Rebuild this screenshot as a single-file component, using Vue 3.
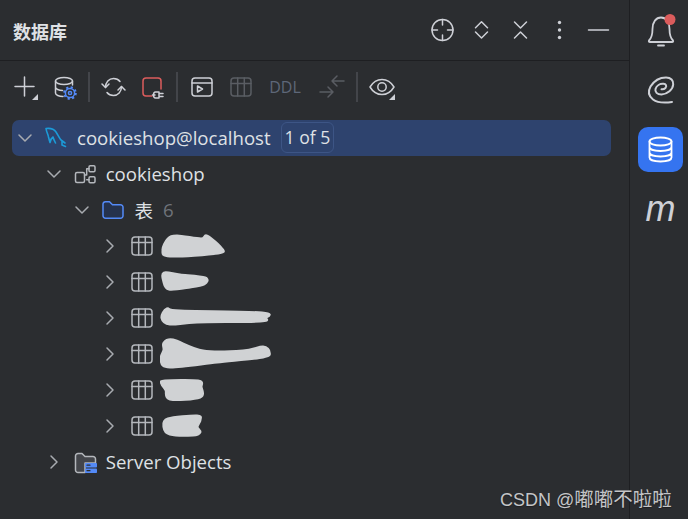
<script setup>
// points of the painted-over table names, smoothed into closed shapes
const smooth = (pts) => {
  const n = pts.length
  let d = `M${pts[0][0]} ${pts[0][1]}`
  for (let i = 0; i < n; i++) {
    const p0 = pts[(i - 1 + n) % n]
    const p1 = pts[i]
    const p2 = pts[(i + 1) % n]
    const p3 = pts[(i + 2) % n]
    const c1 = [p1[0] + (p2[0] - p0[0]) / 6, p1[1] + (p2[1] - p0[1]) / 6]
    const c2 = [p2[0] - (p3[0] - p1[0]) / 6, p2[1] - (p3[1] - p1[1]) / 6]
    d += `C${c1[0].toFixed(1)} ${c1[1].toFixed(1)} ${c2[0].toFixed(1)} ${c2[1].toFixed(1)} ${p2[0]} ${p2[1]}`
  }
  return d + 'Z'
}

const tables = [
  [[3, 22], [8, 11], [17, 8], [41, 11], [47, 8], [61, 20], [58, 25], [10, 28]],
  [[4, 9], [20, 11], [45, 14], [44, 20], [30, 23], [9, 25], [4, 18]],
  [[2, 18], [7, 9], [20, 11], [102, 13], [105, 18], [100, 21], [37, 22], [10, 24]],
  [[1, 24], [4, 14], [4, 7], [13, 4], [43, 15], [83, 15], [103, 11], [109, 16], [103, 21], [57, 26], [10, 31]],
  [[2, 12], [5, 9], [38, 9], [41, 15], [40, 25], [10, 27], [6, 18]],
  [[4, 19], [8, 11], [37, 8], [40, 12], [37, 19], [40, 24], [33, 27], [10, 26]]
].map(smooth)
</script>

<template>
  <div class="window">
    <main class="panel">
      <header class="head">
        <h1 class="title">数据库</h1>
        <div class="head-actions">
          <svg class="hicon" viewBox="0 0 24 24"><circle cx="12" cy="12" r="10.5"/><path d="M12 1.5V7M12 17V22.5M1.5 12H7M17 12H22.5"/></svg>
          <svg class="hicon" viewBox="0 0 24 24"><path d="M6 9.7L12 3.7L18 9.7M6 14L12 20L18 14"/></svg>
          <svg class="hicon" viewBox="0 0 24 24"><path d="M6 4L12 10L18 4M6 20L12 14L18 20"/></svg>
          <svg class="hicon" viewBox="0 0 24 24"><circle class="solid" cx="12" cy="4.5" r="1.7"/><circle class="solid" cx="12" cy="12" r="1.7"/><circle class="solid" cx="12" cy="19.5" r="1.7"/></svg>
          <svg class="hicon" viewBox="0 0 24 24"><path d="M2 12H22"/></svg>
        </div>
      </header>

      <div class="toolbar">
        <svg class="tool" viewBox="0 0 40 40"><path d="M20.5 10V29M11 19.5H30"/><path class="solid" d="M34 27V33H28Z"/></svg>
        <svg class="tool" viewBox="0 0 40 40">
          <ellipse cx="20" cy="14" rx="8.5" ry="3.5"/>
          <path d="M11.5 14V26C11.5 28 15 29.5 19 29.5M28.5 14V18M11.5 20C11.5 22 15 23.5 18.5 23.5"/>
          <circle class="gear" cx="26" cy="26" r="4.6"/>
          <circle class="gear-teeth" cx="26" cy="26" r="5.8"/>
          <circle class="gear" cx="26" cy="26" r="1.6"/>
        </svg>
        <span class="sep sep-a"></span>
        <svg class="tool" viewBox="0 0 40 40">
          <path d="M12.5 20.5C12.5 15 16 11.5 20.5 11.5C23.5 11.5 25.5 12.5 27 14.5M28.5 19.5C28.5 25 25 28.5 20.5 28.5C18 28.5 15.5 27.5 14 25.5"/>
          <path d="M9 17L12.5 20.5L16 17M25 23L28.5 19.5L32 23"/>
        </svg>
        <svg class="tool" viewBox="0 0 40 40">
          <path class="red" d="M19 29H13A3 3 0 0 1 10 26V14A3 3 0 0 1 13 11H25A3 3 0 0 1 28 14V22"/>
          <path d="M19.5 28H22M26 25H22.5C21 25 20.5 26.5 20.5 28C20.5 29.5 21 31 22.5 31H26ZM26 26.5H30M26 29.5H30"/>
        </svg>
        <span class="sep sep-b"></span>
        <svg class="tool" viewBox="0 0 40 40"><rect x="10" y="11" width="20" height="18" rx="3"/><path d="M10 16H30M15.5 19L20.5 22L15.5 25Z"/></svg>
        <svg class="tool off" viewBox="0 0 40 40"><rect x="9" y="11" width="20" height="18" rx="3"/><path d="M9 16.5H29M15.7 11V29M22.3 11V29"/></svg>
        <span class="ddl">DDL</span>
        <svg class="tool off wide" viewBox="0 0 48 40"><path d="M36 14H24M29 9L24 14L29 19M12 25H25M20 20L25 25L20 30"/></svg>
        <span class="sep sep-c"></span>
        <svg class="tool" viewBox="0 0 40 40"><path d="M8 20C11 15 15 12.5 20 12.5C25 12.5 29 15 32 20C29 25 25 27.5 20 27.5C15 27.5 11 25 8 20Z"/><circle cx="20" cy="20" r="4.2"/><path class="solid" d="M33 27V33H27Z"/></svg>
      </div>

      <div class="tree">
        <div class="row selected depth-0">
          <svg class="chev" viewBox="0 0 24 24"><path d="M6 9L12 15L18 9"/></svg>
          <svg class="ricon" viewBox="0 0 22 22"><path class="dolphin" d="M1 1.500C5 1 9 2 11 5C13 8 14 11 16 13L20 16M17 14V18L20.500 19.500M1 1.500C1.500 5 3 7 3.500 10C4 12 4.500 14 5 15.500C5.500 13 6.500 11 8 10C8.500 12 9.500 14 10.500 16"/></svg>
          <span class="label">cookieshop@localhost</span>
          <span class="badge">1 of 5</span>
        </div>

        <div class="row depth-1">
          <svg class="chev" viewBox="0 0 24 24"><path d="M6 9L12 15L18 9"/></svg>
          <svg class="ricon" viewBox="0 0 22 22"><rect x="1.5" y="9.5" width="9" height="10" rx="1.5"/><rect x="15" y="2.7" width="6" height="6" rx="1.2"/><rect x="15" y="13.7" width="6" height="6" rx="1.2"/><path d="M10.5 12H12.7V5.7H15M12.7 16.7H15"/></svg>
          <span class="label">cookieshop</span>
        </div>

        <div class="row depth-2">
          <svg class="chev" viewBox="0 0 24 24"><path d="M6 9L12 15L18 9"/></svg>
          <svg class="ricon" viewBox="0 0 22 22"><path class="folder" d="M1 5A2.5 2.5 0 0 1 3.5 2.7H7.5L10.5 5.7H18.5A2.5 2.5 0 0 1 21 8.2V16.7A2.5 2.5 0 0 1 18.5 19.2H3.5A2.5 2.5 0 0 1 1 16.7Z"/></svg>
          <span class="label">表</span>
          <span class="count">6</span>
        </div>

        <div v-for="(blob, i) in tables" :key="i" class="row depth-3">
          <svg class="chev" viewBox="0 0 24 24"><path d="M9 6L15 12L9 18"/></svg>
          <svg class="ricon" viewBox="0 0 22 22"><rect x="1" y="2" width="20" height="18" rx="3"/><path d="M1 7.5H21M7.7 2V20M14.3 2V20"/></svg>
          <svg class="blob" viewBox="0 0 112 36"><path :d="blob"/></svg>
        </div>

        <div class="row depth-1">
          <svg class="chev" viewBox="0 0 24 24"><path d="M9 6L15 12L9 18"/></svg>
          <svg class="ricon" viewBox="0 0 22 22">
            <path class="folder-grey" d="M1.5 5A2.5 2.5 0 0 1 4 2.5H8L11 5.5H19A2.5 2.5 0 0 1 21.5 8V12H11V21.5H4A2.5 2.5 0 0 1 1.5 19Z"/>
            <rect class="srv" x="11" y="12" width="12" height="4.5" rx=".8"/>
            <rect class="srv" x="11" y="17.5" width="12" height="4.5" rx=".8"/>
            <path class="srv-dot" d="M13 14.2H16M13 19.7H16"/>
          </svg>
          <span class="label">Server Objects</span>
        </div>
      </div>
    </main>

    <aside class="rail">
      <div class="rail-btn">
        <svg viewBox="0 0 45 45" class="rail-icon">
          <path d="M11 33.5C14 30.5 14.5 27 14.5 22C14.5 15 18 10.5 23 10.5C28 10.5 31.5 15 31.5 22C31.5 27 32 30.5 35 33.5C35.5 34.5 35 35 34 35H12C11 35 10.5 34.5 11 33.5Z"/>
          <path d="M20 38.5H26"/>
          <circle class="dot" cx="32" cy="12.5" r="5.5"/>
        </svg>
      </div>
      <div class="rail-btn">
        <svg viewBox="0 0 45 45" class="rail-icon spiral">
          <path d="M34 35C27 36 19 35.500 15 32.500C10.500 29 10 24 12.500 19.500C16 14 22 10.500 28 10.500C33 10.500 35.500 13.500 35.200 17.500C34.800 22.500 29.500 27 23.500 27.500C19 27.500 16.800 25 17.500 22C18.500 18.500 22 16.500 25.500 16.800C28 17 29 19 27.500 21C26.500 22 25 22.500 23.500 22.300"/>
        </svg>
      </div>
      <div class="rail-btn active">
        <svg viewBox="0 0 45 45" class="rail-icon">
          <ellipse cx="22.500" cy="14.500" rx="11" ry="4"/>
          <path d="M11.500 14.500V30.500C11.500 33 16.500 34.500 22.500 34.500C28.500 34.500 33.500 33 33.500 30.500V14.500M11.500 20C11.500 22.500 16.500 24 22.500 24C28.500 24 33.500 22.500 33.500 20M11.500 25.500C11.500 28 16.500 29.500 22.500 29.500C28.500 29.500 33.500 28 33.500 25.500"/>
        </svg>
      </div>
      <div class="rail-btn"><span class="m">m</span></div>
    </aside>

    <div class="watermark">CSDN @<span class="wm-cjk">嘟嘟不啦啦</span></div>
  </div>
</template>

<style scoped>
.window { position: relative; display: flex; width: 688px; height: 519px; overflow: hidden; background: #2b2d30; color: #dfe1e5; font-family: "Open Sans", "Noto Sans CJK SC", sans-serif; font-size: 18.6px; }
svg { display: block; flex: none; fill: none; stroke: #ced0d6; stroke-width: 1.5; stroke-linecap: round; stroke-linejoin: round; }
svg .solid { fill: #ced0d6; stroke: none; }

.panel { width: 629px; flex: none; }
.head { display: flex; align-items: center; justify-content: space-between; height: 60px; padding: 0 11.5px 0 13px; border-bottom: 1px solid #1e1f22; box-sizing: content-box; }
.title { margin: 2px 0 0; font-size: 18px; font-weight: 700; font-family: "Noto Sans CJK SC", sans-serif; color: #dfe1e5; }
.head-actions { display: flex; }
.hicon { width: 24px; height: 24px; padding: 0 7.5px; }

.toolbar { display: flex; align-items: center; height: 52px; padding-left: 4px; }
.tool { width: 40px; height: 40px; }
.tool.wide { width: 48px; }
.tool.off { stroke: #5a5d63; }
.tool .red { stroke: #db5c5c; }
.tool .gear { stroke: #548af7; }
.tool .gear-teeth { stroke: #548af7; stroke-width: 2; stroke-dasharray: 2.2 2.35; stroke-linecap: butt; }
.sep { width: 2px; height: 30px; background: #43454a; flex: none; }
.sep-a { margin: 0 3px 0 4px; }
.sep-b { margin: 0 4px 0 3px; }
.sep-c { margin-right: 4px; }
.ddl { width: 46px; text-align: center; font-size: 16px; color: #5e6778; }

.tree { padding: 7px 18px 0 12px; }
.row { display: flex; align-items: center; height: 36px; border-radius: 7px; }
.row.selected { height: 35.500px; margin-bottom: .5px; background: #2e436e; }
.row.selected .label { margin-top: 0; }
.depth-0 { padding-left: 1px; }
.depth-1 { padding-left: 29.700px; }
.depth-2 { padding-left: 58.400px; }
.depth-3 { padding-left: 86px; }
.chev { width: 24px; height: 24px; stroke: #a8abb0; }
.ricon { width: 22px; height: 22px; margin: 0 10px 0 8px; overflow: visible; stroke: #b4b7bc; }
.depth-3 .ricon { margin-left: 9px; }
.label { white-space: nowrap; margin-top: -2px; }
.badge { margin-left: 10px; padding: 0 3px; height: 29px; font-size: 17.6px; line-height: 29px; border: 1px solid #3d5585; border-radius: 6px; }
.count { margin-left: 10px; margin-top: -1px; color: #6f737a; }
.ricon .dolphin { stroke: #1c9bd8; stroke-width: 1.600; }
.ricon .folder { stroke: #548af7; fill: #25324d; }
.folder-grey { fill: #43454a; }
.srv { fill: #548af7; stroke: none; }
.srv-dot { stroke: #2b2d30; stroke-width: 1.200; }
.blob { width: 112px; height: 36px; margin-left: -3px; stroke: #d0d2d4; stroke-width: 3; fill: #d0d2d4; }

.rail { flex: 1; border-left: 1px solid #1e1f22; padding: 7px 0 0 8px; display: flex; flex-direction: column; gap: 15px; }
.rail-btn { width: 45px; height: 45px; border-radius: 10px; display: flex; align-items: center; justify-content: center; }
.rail-btn.active { background: #3574f0; }
.rail-btn.active .rail-icon { stroke: #fff; }
.rail-icon { width: 45px; height: 45px; stroke-width: 1.800; }
.rail-icon.spiral { stroke-width: 2; }
.rail-icon .dot { fill: #db5c5c; stroke: none; }
.m { font-family: "Liberation Sans", sans-serif; font-style: italic; font-size: 36px; line-height: 1; color: #ced0d6; margin-top: -2px; }

.watermark { position: absolute; left: 500px; top: 487px; font-family: "Liberation Sans", "Noto Sans CJK SC", sans-serif; font-size: 18px; line-height: 24px; white-space: nowrap; color: #c4c5c7; text-shadow: 0 1px 1px #1e1f22; }
.wm-cjk { font-size: 19.500px; }
</style>

<style>
body { background: #2b2d30; }
</style>
